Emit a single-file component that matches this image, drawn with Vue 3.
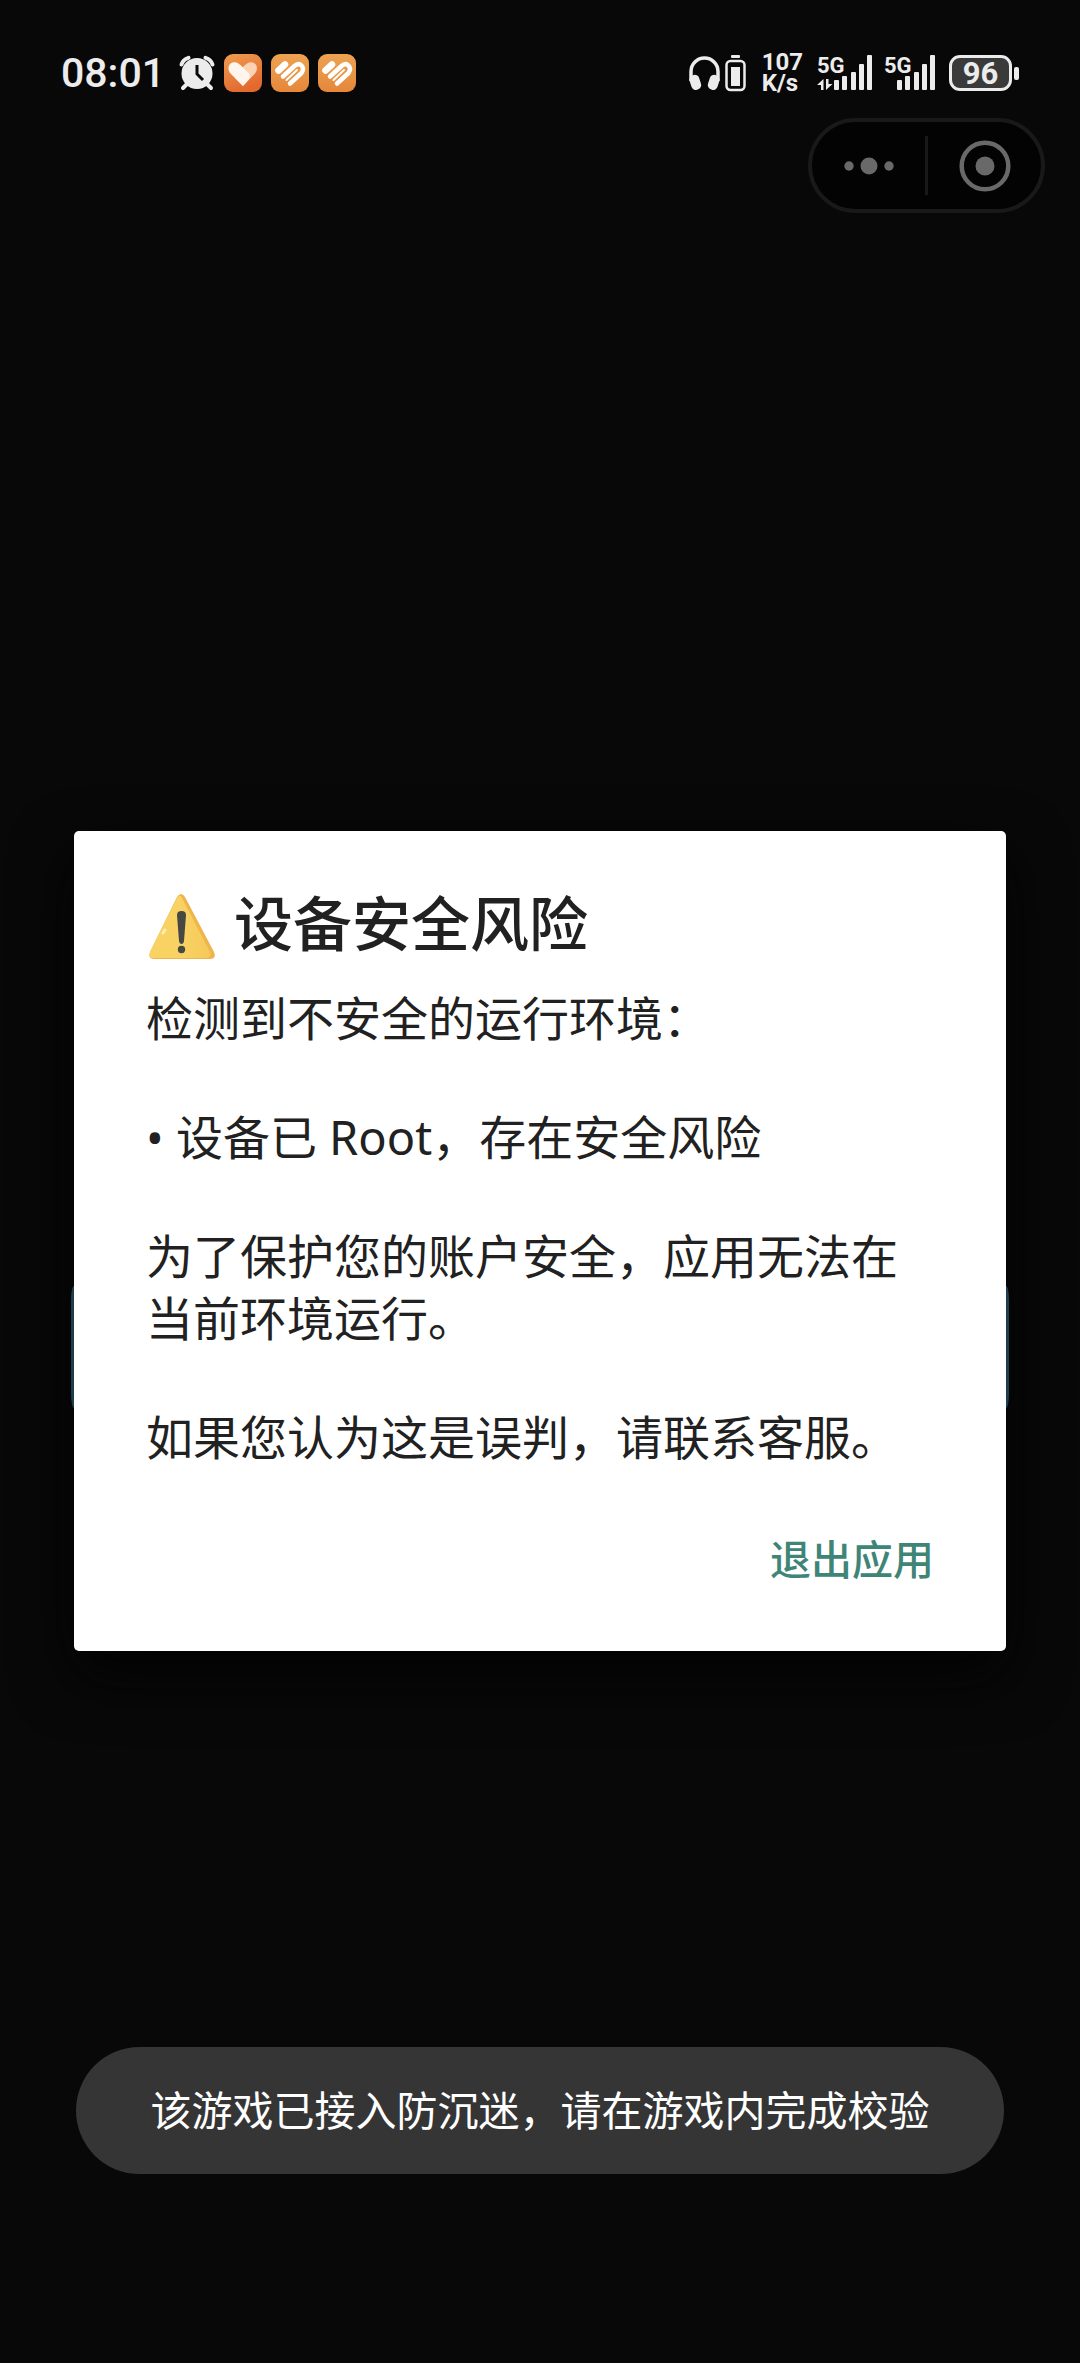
<script setup>
const paragraphs = [
  '检测到不安全的运行环境：',
  '• 设备已 Root，存在安全风险',
  '为了保护您的账户安全，应用无法在当前环境运行。',
  '如果您认为这是误判，请联系客服。',
]
const bars = [
  { x: 17, y: 25 },
  { x: 25, y: 21 },
  { x: 34, y: 17 },
  { x: 42, y: 9 },
  { x: 50, y: 0 },
]
</script>

<template>
  <div class="screen">
    <header class="status">
      <div class="group">
        <time class="clock">08:01</time>
        <svg class="alarm" width="36" height="36" viewBox="0 0 36 36">
          <g fill="none" stroke="#ececec" stroke-width="4" stroke-linecap="round">
            <path d="M2.500 9.500Q4 4.500 9.500 2.800M33.500 9.500Q32 4.500 26.500 2.800M8 29l-4 4M28 29l4 4" />
          </g>
          <circle cx="18" cy="18.500" r="15.500" fill="#ececec" />
          <path d="M18 10v9l6 6" fill="none" stroke="#0a0a0a" stroke-width="3" />
        </svg>
        <svg class="app" width="38" height="38" viewBox="0 0 38 38">
          <defs>
            <linearGradient id="warm" x1="0" y1="0" x2="0.400" y2="1">
              <stop offset="0" stop-color="#ef9d50" />
              <stop offset="1" stop-color="#e3692f" />
            </linearGradient>
            <linearGradient id="amber" x1="0" y1="0" x2="0" y2="1">
              <stop offset="0" stop-color="#eca352" />
              <stop offset="1" stop-color="#e6873a" />
            </linearGradient>
          </defs>
          <rect width="38" height="38" rx="9" fill="url(#warm)" />
          <path d="M19 13q5-6 10-4.500c5 2 5 8 1.500 11.500L19 32l-8-8z" fill="#fbd3b4" />
          <path d="M19 32L7 20C3 16 4 10 8.500 8.500c4-1 7 1 10.500 5l6 6q2 4-1.500 7.500z" fill="#fff5ec" />
        </svg>
        <svg v-for="n in 2" :key="n" class="app" width="38" height="38" viewBox="0 0 38 38">
          <rect width="38" height="38" rx="9" fill="url(#amber)" />
          <g fill="none" stroke="#fff" stroke-width="4.500" stroke-linecap="round" stroke-linejoin="round">
            <path d="M7.500 16.500L14 10.500" stroke-width="6.500" />
            <path d="M12 22.500L23.500 12q4-3.500 7-.5t0 7.500L19 29.500" />
          </g>
          <path d="M15.500 26L26 16" fill="none" stroke="#fff" stroke-width="2" stroke-linecap="round" />
        </svg>
      </div>

      <div class="group">
        <svg width="33" height="38" viewBox="0 0 33 38">
          <path d="M3 27V17.500a13.500 13.500 0 0 1 27 0V27" fill="none" stroke="#ececec" stroke-width="3.500" />
          <rect x="2.500" y="21" width="10" height="15" rx="4.500" fill="#ececec" transform="rotate(-18 7 29)" />
          <rect x="20.500" y="21" width="10" height="15" rx="4.500" fill="#ececec" transform="rotate(18 26 29)" />
        </svg>
        <svg class="buds" width="21" height="38" viewBox="0 0 21 38">
          <rect x="6" y="1" width="9" height="3" rx="1" fill="#ececec" />
          <rect x="1.500" y="7" width="18" height="29" rx="4" fill="none" stroke="#ececec" stroke-width="2.500" />
          <rect x="6" y="13" width="9" height="19" fill="#ececec" />
        </svg>
        <div class="speed"><span>107</span><span>K/s</span></div>
        <svg class="signal" width="56" height="38" viewBox="0 0 56 38">
          <text x="0" y="19">5G</text>
          <path d="M6.500 25v11H4v-5H0zM9 25v11l6.500-6H11.500v-5z" />
          <rect v-for="b in bars" :key="b.x" :x="b.x" :y="b.y + 1" width="5" :height="35 - b.y" rx="1" />
        </svg>
        <svg class="signal second" width="56" height="38" viewBox="4 0 56 38">
          <text x="4" y="19">5G</text>
          <rect v-for="b in bars" :key="b.x" :x="b.x" :y="b.y + 1" width="5" :height="35 - b.y" rx="1" />
        </svg>
        <div class="battery"><span class="level">96</span><i class="nub"></i></div>
      </div>
    </header>

    <nav class="capsule">
      <button type="button" aria-label="更多">
        <svg width="50" height="20" viewBox="0 0 50 20" fill="#696969">
          <circle cx="5" cy="10" r="4.700" />
          <circle cx="25" cy="10" r="8.500" />
          <circle cx="45" cy="10" r="4.700" />
        </svg>
      </button>
      <span class="divider"></span>
      <button type="button" aria-label="关闭">
        <svg width="52" height="52" viewBox="0 0 52 52">
          <circle cx="26" cy="26" r="23.300" fill="none" stroke="#696969" stroke-width="4.500" />
          <circle cx="26" cy="26" r="9.500" fill="#696969" />
        </svg>
      </button>
    </nav>

    <main class="stage">
      <section class="dialog" role="alertdialog" aria-labelledby="risk-title">
        <h1 id="risk-title" class="title">
          <svg width="72" height="80" viewBox="0 -7 72 80">
            <defs>
              <linearGradient id="sign" x1="0" y1="0" x2="1" y2="0">
                <stop offset="0.500" stop-color="#f8d363" />
                <stop offset="1" stop-color="#f5c95a" />
              </linearGradient>
            </defs>
            <path d="M31 9q4-6 8 0l29 55q3 7-4 7H8q-6.500 0-4-7z" fill="#efb44b" />
            <path d="M31 10q3-5 5 0l28 54q2 6-4 6H8q-6 0-4-6z" fill="url(#sign)" />
            <path d="M17 45l2-3" stroke="#fdeeb0" stroke-width="3" stroke-linecap="round" />
            <path d="M31 27q0-4 4.500-4t4.500 4l-2 26q-.5 3-2.500 3t-2.500-3z" fill="#474743" />
            <circle cx="35.500" cy="61.500" r="3.700" fill="#474743" />
          </svg>
          <span>设备安全风险</span>
        </h1>
        <div class="message">
          <p v-for="p in paragraphs" :key="p">{{ p }}</p>
        </div>
        <div class="actions">
          <button type="button" class="exit">退出应用</button>
        </div>
      </section>
    </main>

    <div class="toast" role="status">该游戏已接入防沉迷，请在游戏内完成校验</div>
  </div>
</template>

<style>
body {
  background: #080808;
}
</style>

<style scoped>
.screen {
  box-sizing: border-box;
  min-height: 100vh;
  padding-bottom: 189px;
  display: flex;
  flex-direction: column;
  background: #080808;
  color: #ececec;
  font-family: "Noto Sans CJK SC", sans-serif;
}
button {
  margin: 0;
  padding: 0;
  border: 0;
  background: none;
  font: inherit;
  cursor: pointer;
}
svg {
  display: block;
  flex: none;
}
.status {
  display: flex;
  justify-content: space-between;
  height: 50px;
  padding: 48px 61px 0;
  font-family: Roboto, sans-serif;
}
.group {
  display: flex;
  align-items: center;
}
.clock {
  font-size: 41px;
  line-height: 50px;
  font-weight: 500;
}
.alarm {
  margin-left: 14px;
}
.app {
  margin-left: 9px;
}
.buds {
  margin-left: 4px;
}
.speed {
  display: flex;
  flex-direction: column;
  margin-left: 16px;
  font-size: 24px;
  line-height: 21px;
  font-weight: 700;
}
.signal {
  margin-left: 14px;
  fill: #ececec;
  overflow: visible;
}
.signal text {
  font-size: 22px;
  font-weight: 700;
}
.second {
  margin-left: 11px;
}
.battery {
  display: flex;
  align-items: center;
  gap: 2px;
  margin-left: 9px;
}
.level {
  box-sizing: border-box;
  width: 63px;
  height: 36px;
  border: 3px solid #ececec;
  border-radius: 11px;
  background: #3a3a3a;
  font-size: 31px;
  line-height: 31px;
  font-weight: 700;
  text-align: center;
}
.nub {
  width: 5px;
  height: 13px;
  border-radius: 2px;
  background: #ececec;
}
.capsule {
  box-sizing: border-box;
  align-self: flex-end;
  display: flex;
  align-items: center;
  width: 237px;
  height: 95px;
  margin: 20px 35px 0 0;
  border: 4px solid #191919;
  border-radius: 48px;
  background: #030303;
}
.capsule button {
  flex: 1;
  display: flex;
  justify-content: center;
}
.divider {
  width: 3px;
  height: 59px;
  background: #191919;
}
.stage {
  flex: 1;
  display: flex;
  align-items: center;
  padding: 222px 74px 0;
}
.dialog {
  box-sizing: border-box;
  position: relative;
  z-index: 0;
  flex: 1;
  padding: 50px 72px 64px;
  border-radius: 5px;
  background: #fff;
  box-shadow: 0 24px 60px #030303;
  color: #212121;
}
.dialog::before,
.dialog::after {
  content: "";
  position: absolute;
  z-index: -1;
  top: 455px;
  width: 3px;
  height: 122px;
  background: #1e3d4d;
}
.dialog::before {
  right: 100%;
  border-radius: 3px 0 0 3px / 14px 0 0 14px;
}
.dialog::after {
  left: 100%;
  border-radius: 0 3px 3px 0 / 0 14px 14px 0;
}
.title {
  display: flex;
  align-items: center;
  gap: 16px;
  margin: 0 0 26px;
  font-size: 59px;
  line-height: 80px;
  font-weight: 500;
}
.message {
  font-family: "Noto Sans", "Noto Sans CJK SC", sans-serif;
}
.message p {
  margin: 0 0 57px;
  font-size: 47px;
  line-height: 62px;
}
.actions {
  display: flex;
  justify-content: flex-end;
  padding-top: 2px;
}
.exit {
  color: #3f8577;
  font-size: 41px;
  line-height: 60px;
  font-weight: 500;
}
.toast {
  margin: 0 76px;
  padding: 32px 24px;
  border-radius: 64px;
  background: #353535;
  color: #fff;
  font-family: "Noto Sans", "Noto Sans CJK SC", sans-serif;
  font-size: 41px;
  line-height: 63px;
  text-align: center;
}
</style>
